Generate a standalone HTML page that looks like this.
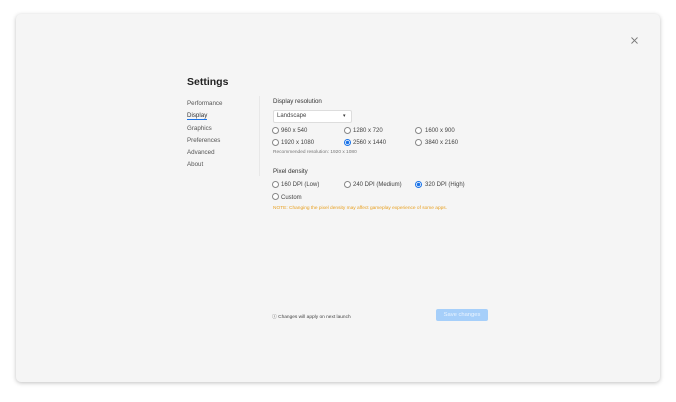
<!DOCTYPE html><html><head><style>
body{margin:0;width:676px;height:400px;background:#fff;font-family:"Liberation Sans",sans-serif;position:relative;overflow:hidden}
.p{position:absolute;left:16px;top:14px;width:644px;height:368px;background:#f5f5f5;border-radius:5px;box-shadow:0 1px 4px rgba(0,0,0,.25)}
.a{position:absolute;white-space:nowrap;color:#333}
.nav{font-size:6.2px;color:#555}
.r{position:absolute;width:5px;height:5px;border:0.8px solid #888;border-radius:50%;background:#fff}
.r.on{border-color:#1a73e8;background:radial-gradient(circle,#1a73e8 45%,#fff 55%)}
.t{font-size:6px;color:#444}
.w{position:absolute;left:0;top:2px;width:676px;height:400px}
</style></head><body>
<div class="p"></div>
<svg style="position:absolute;left:631px;top:37px" width="7" height="7"><path d="M0.5 0.5L6.5 6.5M6.5 0.5L0.5 6.5" stroke="#777" stroke-width="0.9"/></svg>
<div class="w">
<div class="a" style="left:187px;top:74px;font-size:10.5px;font-weight:bold;color:#222">Settings</div>
<div class="a nav" style="left:187px;top:98px">Performance</div>
<div class="a nav" style="left:187px;top:110px;border-bottom:1px solid #1a73e8;color:#333">Display</div>
<div class="a nav" style="left:187px;top:123px">Graphics</div>
<div class="a nav" style="left:187px;top:135px">Preferences</div>
<div class="a nav" style="left:187px;top:147px">Advanced</div>
<div class="a nav" style="left:187px;top:159px">About</div>
<div style="position:absolute;left:259px;top:94px;width:1px;height:80px;background:#e8e8e8"></div>
<div class="a" style="left:273px;top:96px;font-size:6.2px">Display resolution</div>
<div style="position:absolute;left:273px;top:108px;width:77px;height:11px;background:#fff;border:0.6px solid #ddd;border-radius:2px"></div>
<div class="a t" style="left:277px;top:111px">Landscape</div>
<div class="a" style="left:343px;top:111px;font-size:5px">▾</div>
<div class="r" style="left:272px;top:124.5px"></div><div class="a t" style="left:281px;top:126px">960 x 540</div>
<div class="r" style="left:344px;top:124.5px"></div><div class="a t" style="left:353px;top:126px">1280 x 720</div>
<div class="r" style="left:415px;top:124.5px"></div><div class="a t" style="left:425px;top:126px">1600 x 900</div>
<div class="r" style="left:272px;top:136.5px"></div><div class="a t" style="left:281px;top:138px">1920 x 1080</div>
<div class="r on" style="left:344px;top:136.5px"></div><div class="a t" style="left:353px;top:138px">2560 x 1440</div>
<div class="r" style="left:415px;top:136.5px"></div><div class="a t" style="left:425px;top:138px">3840 x 2160</div>
<div class="a" style="left:273px;top:148px;font-size:4.8px;color:#777">Recommended resolution: 1920 x 1080</div>
<div class="a" style="left:273px;top:166px;font-size:6.2px">Pixel density</div>
<div class="r" style="left:272px;top:178.5px"></div><div class="a t" style="left:281px;top:180px">160 DPI (Low)</div>
<div class="r" style="left:344px;top:178.5px"></div><div class="a t" style="left:353px;top:180px">240 DPI (Medium)</div>
<div class="r on" style="left:415px;top:178.5px"></div><div class="a t" style="left:425px;top:180px">320 DPI (High)</div>
<div class="r" style="left:272px;top:191px"></div><div class="a t" style="left:281px;top:192.5px">Custom</div>
<div class="a" style="left:273px;top:204px;font-size:4.8px;color:#e8a020">NOTE: Changing the pixel density may affect gameplay experience of some apps.</div>
<div class="a" style="left:272px;top:310.5px;font-size:4.8px;color:#444">ⓘ Changes will apply on next launch</div>
<div style="position:absolute;left:436px;top:307px;width:52px;height:12px;background:#a6cffa;border-radius:2px;color:#eaf4ff;font-size:5.8px;text-align:center;line-height:12px">Save changes</div>
</div>
</body></html>
